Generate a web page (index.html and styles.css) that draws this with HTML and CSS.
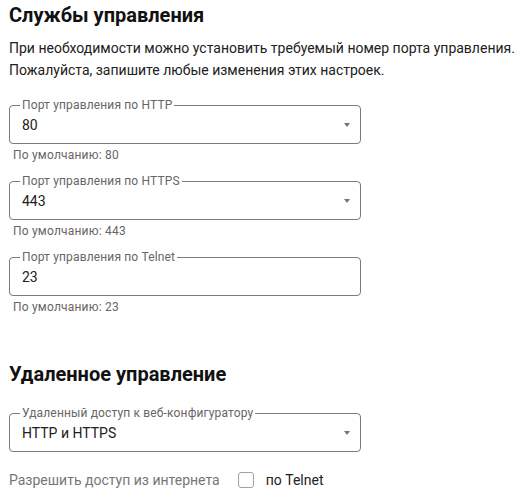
FILE: index.html
```html
<!DOCTYPE html>
<html>

<head>
    <title>Службы управления</title>
    <link rel="stylesheet" href="styles.css">
</head>

<body>
    <div class="page">
        <h2>Службы управления</h2>

        <p class="intro">
            При необходимости можно установить требуемый номер порта управления.
            Пожалуйста, запишите любые изменения этих настроек.
        </p>

        <div class="field">
            <fieldset class="box select">
                <legend>Порт управления по HTTP</legend>
                <span class="value">80</span>
                <span class="arrow"></span>
            </fieldset>
            <div class="hint">По умолчанию: 80</div>
        </div>

        <div class="field">
            <fieldset class="box select">
                <legend>Порт управления по HTTPS</legend>
                <span class="value">443</span>
                <span class="arrow"></span>
            </fieldset>
            <div class="hint">По умолчанию: 443</div>
        </div>

        <div class="field">
            <fieldset class="box">
                <legend>Порт управления по Telnet</legend>
                <span class="value">23</span>
            </fieldset>
            <div class="hint">По умолчанию: 23</div>
        </div>

        <h2 class="second">Удаленное управление</h2>

        <div class="field">
            <fieldset class="box select">
                <legend>Удаленный доступ к веб-конфигуратору</legend>
                <span class="value">HTTP и HTTPS</span>
                <span class="arrow"></span>
            </fieldset>
        </div>

        <div class="access">
            <span class="access-label">Разрешить доступ из интернета</span>
            <label class="check">
                <span class="checkbox"></span>
                по Telnet
            </label>
        </div>
    </div>
</body>

</html>
```

FILE: styles.css
```css
body {
    margin: 0;
    font-family: Roboto, "Noto Sans", sans-serif;
    color: #212121;
    background: #fff;
}

.page {
    padding: 3px 9px 0;
}

h2 {
    margin: 0;
    font-size: 20px;
    line-height: 24px;
    font-weight: 700;
    color: #111;
}

h2.second {
    margin: 48px 0 20px;
}

.intro {
    margin: 10px 0 17px;
    width: 515px;
    font-size: 14px;
    line-height: 22px;
}

.field {
    width: 352px;
    margin-bottom: 12px;
}

.box {
    position: relative;
    display: flex;
    align-items: center;
    margin: 0;
    padding: 0 12px;
    height: 46px;
    box-sizing: border-box;
    border: 1px solid #7a7a7a;
    border-radius: 4px;
}

.box legend {
    margin-left: -2px;
    padding: 0 2px;
    font-size: 12px;
    line-height: 14px;
    letter-spacing: 0.15px;
    color: #666;
}

.value {
    flex: 1;
    font-size: 14px;
    margin-top: -5px;
}

.arrow {
    width: 0;
    height: 0;
    margin: -5px -2px 0 0;
    border-left: 3.5px solid transparent;
    border-right: 3.5px solid transparent;
    border-top: 4px solid #757575;
}

.hint {
    margin-top: 4px;
    padding-left: 4px;
    font-size: 12px;
    line-height: 14px;
    letter-spacing: 0.2px;
    color: #666;
}

.access {
    display: flex;
    align-items: center;
    margin-top: 19px;
    height: 18px;
    font-size: 14px;
}

.access-label {
    color: #777;
}

.check {
    display: flex;
    align-items: center;
    margin-left: 18px;
    gap: 12px;
    color: #222;
}

.checkbox {
    width: 14px;
    height: 14px;
    border: 1px solid #a0a0a0;
    border-radius: 3px;
}
```
